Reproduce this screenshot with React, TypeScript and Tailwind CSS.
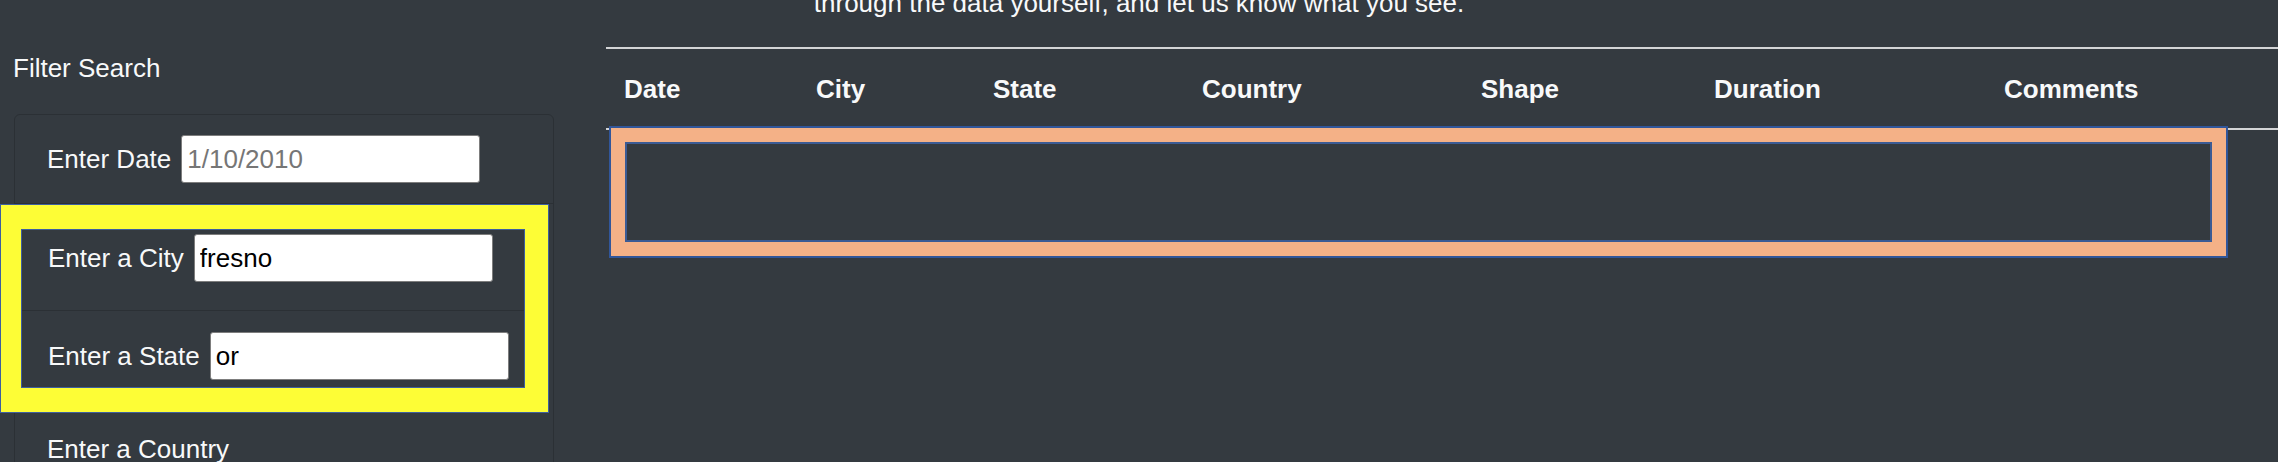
import React from 'react';

const HEADERS = ['Date', 'City', 'State', 'Country', 'Shape', 'Duration', 'Comments'];

const inputCls =
  'h-[48px] w-[299px] ml-[10px] bg-white border-[1.5px] border-[#7d7d7d] rounded-[3px] px-[5px] text-[26px] text-black placeholder:text-[#767676] outline-none';

function FilterRow({
  label,
  value,
  placeholder,
  className,
}: {
  label: string;
  value?: string;
  placeholder?: string;
  className: string;
}) {
  return (
    <li className={className}>
      <label className="leading-[30px]">{label}</label>
      <input className={inputCls} defaultValue={value} placeholder={placeholder} />
    </li>
  );
}

export default function App() {
  return (
    <div className="h-[462px] overflow-hidden bg-[#343a40] text-[#f8f9fa] font-['Liberation_Sans',Arial,sans-serif] text-[26px]">
      {/* tail of the intro paragraph, cut off at the top */}
      <p className="-mt-[12px] h-[28px] leading-[30px] text-center">
        through the data yourself, and let us know what you see.
      </p>

      <div className="flex">
        {/* Filters */}
        <aside className="w-[606px] shrink-0 pl-[13px] pt-[37px]">
          <h5 className="leading-[30px]">Filter Search</h5>
          <ul className="mt-[31px] ml-[1px] w-[540px] border border-[#2b3035] rounded-[6px]">
            <FilterRow
              label="Enter Date"
              placeholder="1/10/2010"
              className="flex items-center pl-[32px] pt-[20px] pb-[20px] border-b border-[#2b3035]"
            />

            {/* highlighted city / state group */}
            <li className="-ml-[15px] w-[549px] bg-[#fdfd36] border border-[#3e5f9e] pt-[24px] pb-[24px] pl-[20px] pr-[23px]">
              <ul className="border border-[#3e5f9e] bg-[#343a40]">
                <FilterRow
                  label="Enter a City"
                  value="fresno"
                  className="flex items-center pl-[26px] pt-[4px] pb-[28px] border-b border-[#2b3035]"
                />
                <FilterRow
                  label="Enter a State"
                  value="or"
                  className="flex items-center pl-[26px] pt-[21px] pb-[7px]"
                />
              </ul>
            </li>

            <FilterRow
              label="Enter a Country"
              className="flex flex-wrap items-center pl-[32px] pr-[32px] pt-[21px] pb-[20px]"
            />
          </ul>
        </aside>

        {/* Results table */}
        <section className="flex-1 pt-[31px]">
          <div className="h-[2px] bg-[#d3d4d6]" />
          <div className="grid grid-cols-[192px_177px_209px_279px_233px_290px_1fr] pt-[25px] pb-[24px] border-b-2 border-[#d3d4d6] font-bold leading-[30px]">
            {HEADERS.map((h) => (
              <div key={h} className="pl-[18px]">
                {h}
              </div>
            ))}
          </div>
          <div className="-mt-[4px] ml-[3px] w-[1619px] h-[132px] bg-[#f4b187] border-2 border-[#31569a] p-[14px]">
            <div className="h-full border-2 border-[#3b5b94] bg-[#343a40]" />
          </div>
        </section>
      </div>
    </div>
  );
}
